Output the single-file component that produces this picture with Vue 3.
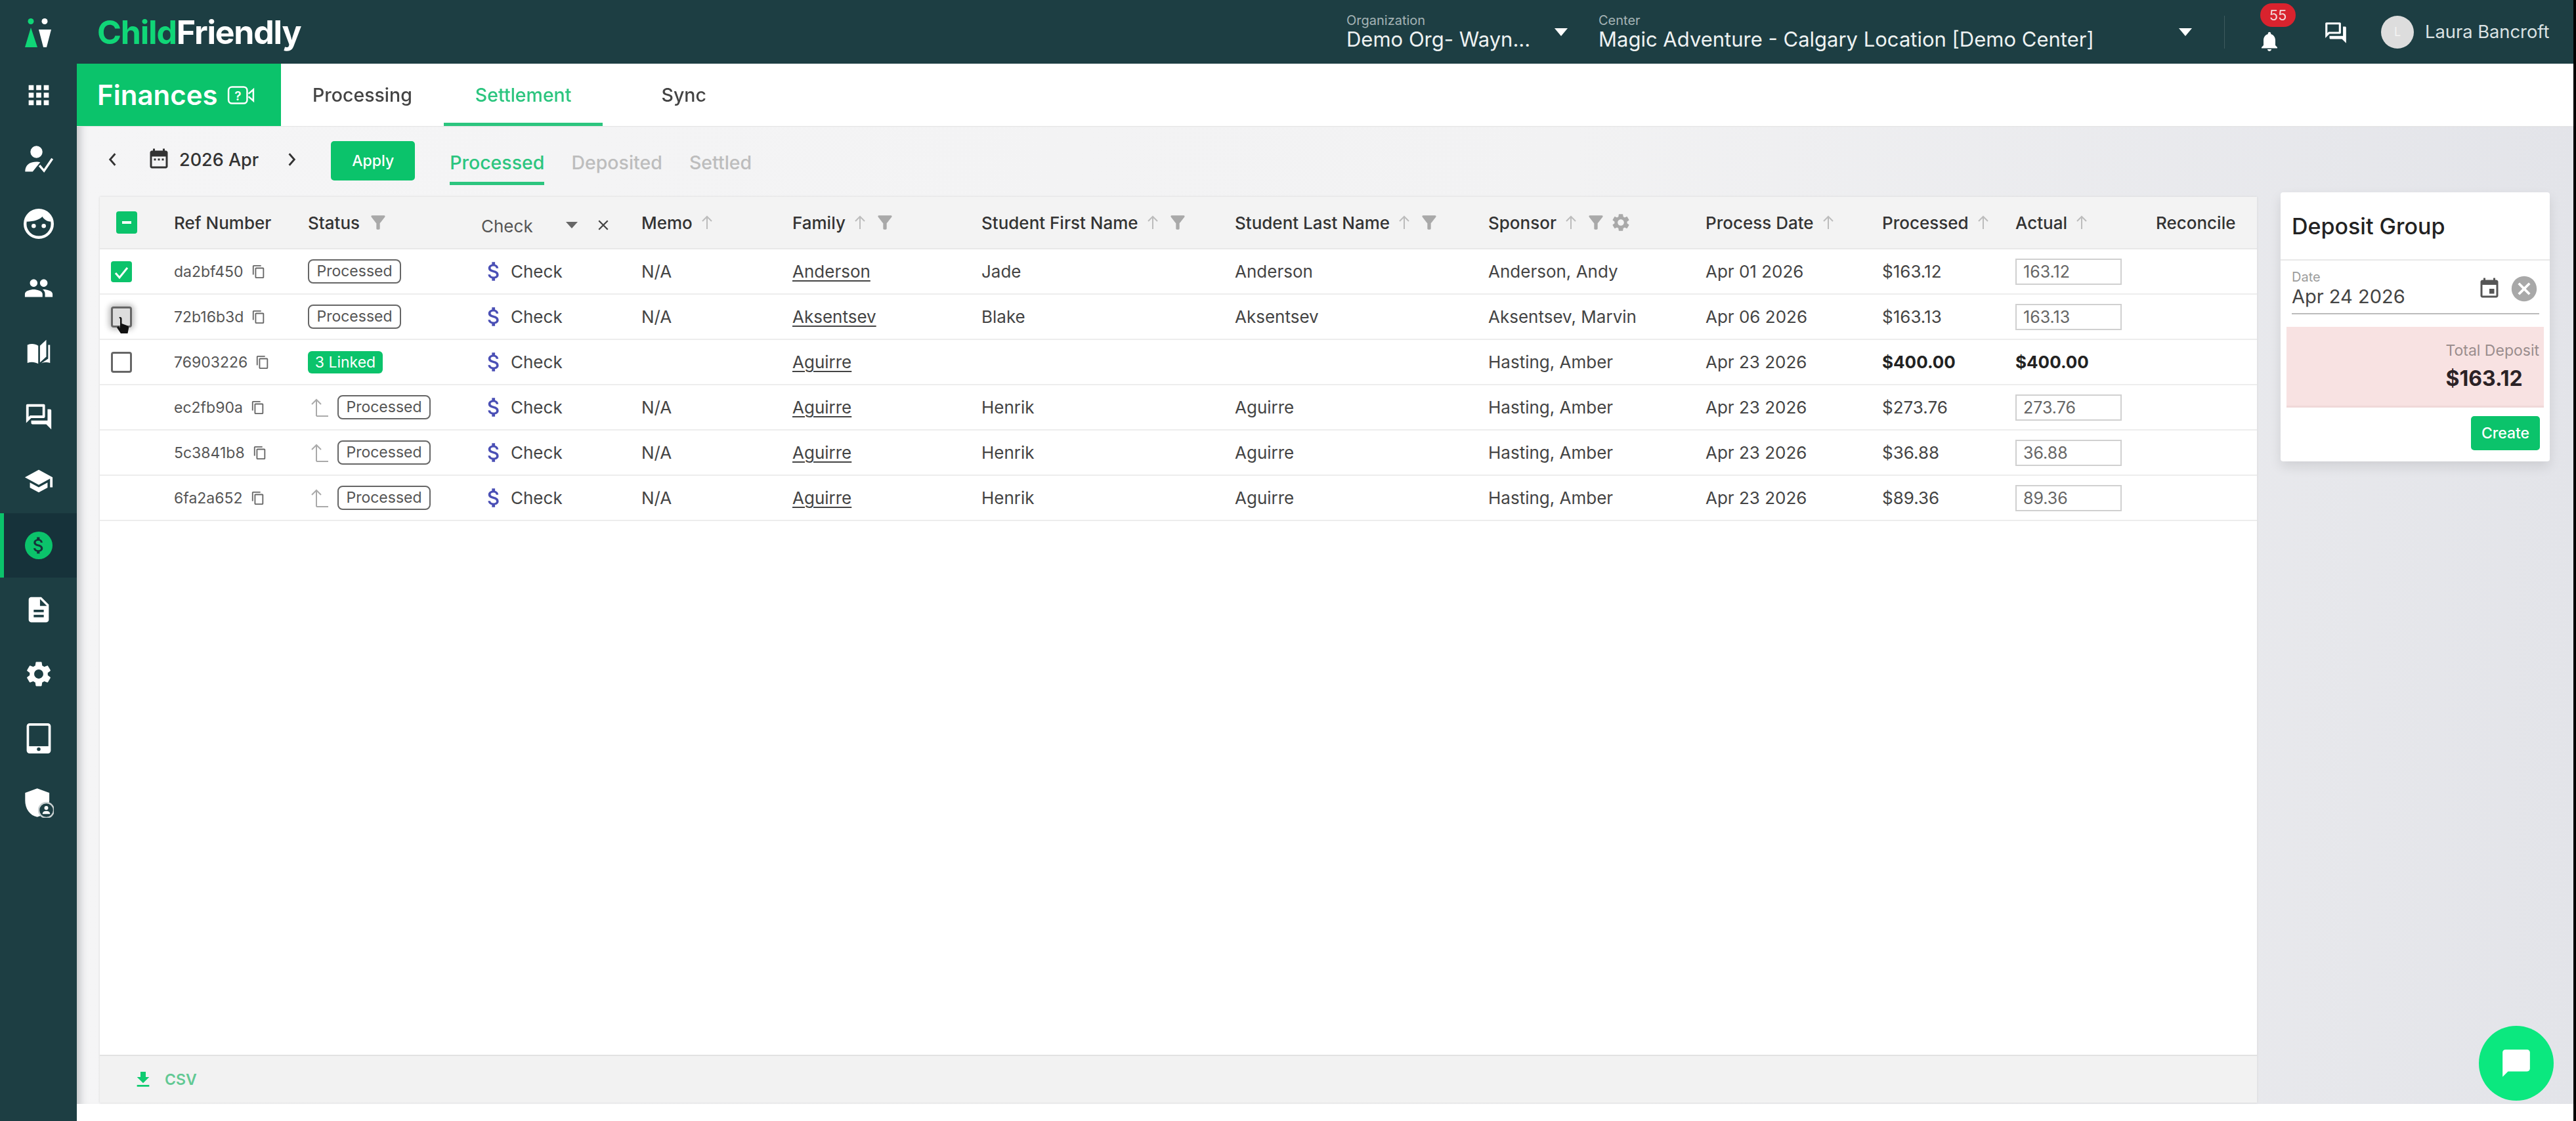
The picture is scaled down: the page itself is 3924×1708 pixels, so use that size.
<script setup>
const icons = {
  apps: 'M4 8h4V4H4v4zm6 12h4v-4h-4v4zm-6 0h4v-4H4v4zm0-6h4v-4H4v4zm6 0h4v-4h-4v4zm6-10v4h4V4h-4zm-6 4h4V4h-4v4zm6 6h4v-4h-4v4zm0 6h4v-4h-4v4z',
  people: 'M16 11c1.66 0 2.99-1.34 2.99-3S17.66 5 16 5c-1.66 0-3 1.34-3 3s1.34 3 3 3zm-8 0c1.66 0 2.99-1.34 2.99-3S9.66 5 8 5C6.34 5 5 6.34 5 8s1.34 3 3 3zm0 2c-2.33 0-7 1.17-7 3.5V19h14v-2.5c0-2.33-4.67-3.5-7-3.5zm8 0c-.29 0-.62.02-.97.05 1.16.84 1.97 1.97 1.97 3.45V19h6v-2.5c0-2.33-4.67-3.5-7-3.5z',
  book: 'M3 6c3-1.2 6-1 8.6.6V21c-2.600-1.500-5.600-1.700-8.600-.7zM13 6.600L18 2v13.400l-5 4.600zM19.500 6H21v14.300c-2.400-.7-4.800-.6-7 .3l5.500-3.600z',
  forum: 'M15 4v7H5.17L4 12.17V4h11m1-2H3c-.55 0-1 .45-1 1v14l4-4h10c.55 0 1-.45 1-1V3c0-.55-.45-1-1-1zm5 4h-2v9H6v2c0 .55.45 1 1 1h11l4 4V7c0-.55-.45-1-1-1z',
  school: 'M5 13.18v4L12 21l7-3.82v-4L12 17l-7-3.82zM12 3L1 9l11 6 9-4.91V17h2V9L12 3z',
  doc: 'M14 2H6c-1.1 0-1.99.9-1.99 2L4 20c0 1.1.89 2 1.99 2H18c1.1 0 2-.9 2-2V8l-6-6zm2 16H8v-2h8v2zm0-4H8v-2h8v2zm-3-5V3.5L18.5 9H13z',
  gear: 'M19.14 12.94c.04-.3.06-.61.06-.94 0-.32-.02-.64-.07-.94l2.03-1.58c.18-.14.23-.41.12-.61l-1.92-3.32c-.12-.22-.37-.29-.59-.22l-2.39.96c-.5-.38-1.03-.7-1.62-.94l-.36-2.54c-.04-.24-.24-.41-.48-.41h-3.84c-.24 0-.43.17-.47.41l-.36 2.54c-.59.24-1.13.57-1.62.94l-2.39-.96c-.22-.08-.47 0-.59.22L2.74 8.87c-.12.21-.08.47.12.61l2.03 1.58c-.05.3-.09.63-.09.94s.02.64.07.94l-2.03 1.58c-.18.14-.23.41-.12.61l1.92 3.32c.12.22.37.29.59.22l2.39-.96c.5.38 1.03.7 1.62.94l.36 2.54c.05.24.24.41.48.41h3.84c.24 0 .44-.17.47-.41l.36-2.54c.59-.24 1.13-.56 1.62-.94l2.39.96c.22.08.47 0 .59-.22l1.92-3.32c.12-.22.07-.47-.12-.61l-2.01-1.58zM12 15.6c-1.98 0-3.6-1.62-3.6-3.6s1.62-3.6 3.6-3.6 3.6 1.62 3.6 3.6-1.62 3.6-3.6 3.6z',
  money: 'M11.8 10.9c-2.27-.59-3-1.2-3-2.15 0-1.09 1.01-1.85 2.7-1.85 1.78 0 2.44.85 2.5 2.1h2.21c-.07-1.72-1.12-3.3-3.21-3.81V3h-3v2.16c-1.94.42-3.5 1.68-3.5 3.61 0 2.31 1.91 3.46 4.7 4.13 2.5.6 3 1.48 3 2.41 0 .69-.49 1.79-2.7 1.79-2.06 0-2.87-.92-2.98-2.1h-2.2c.12 2.19 1.76 3.42 3.68 3.83V21h3v-2.15c1.95-.37 3.5-1.5 3.5-3.55 0-2.84-2.43-3.81-4.7-4.4z',
  copy: 'M16 1H4c-1.1 0-2 .9-2 2v14h2V3h12V1zm3 4H8c-1.1 0-2 .9-2 2v14c0 1.1.9 2 2 2h11c1.1 0 2-.9 2-2V7c0-1.1-.9-2-2-2zm0 16H8V7h11v14z',
  funnel: 'M4.25 5.61C6.27 8.2 10 13 10 13v6c0 .55.45 1 1 1h2c.55 0 1-.45 1-1v-6s3.72-4.8 5.74-7.39A.998.998 0 0018.95 4H5.04c-.83 0-1.32.95-.79 1.61z',
  event: 'M17 12h-5v5h5v-5zM16 1v2H8V1H6v2H5c-1.11 0-1.99.9-1.99 2L3 19c0 1.1.89 2 2 2h14c1.1 0 2-.9 2-2V5c0-1.1-.9-2-2-2h-1V1h-2zm3 18H5V8h14v11z',
  month: 'M19 3h-1V1h-2v2H8V1H6v2H5c-1.11 0-2 .9-2 2v14c0 1.1.89 2 2 2h14c1.1 0 2-.9 2-2V5c0-1.1-.9-2-2-2zm0 16H5V9h14v10zM7 11h2v2H7zm4 0h2v2h-2zm4 0h2v2h-2z',
  cancel: 'M12 2C6.47 2 2 6.47 2 12s4.47 10 10 10 10-4.47 10-10S17.53 2 12 2zm5 13.59L15.59 17 12 13.41 8.41 17 7 15.59 10.59 12 7 8.41 8.41 7 12 10.59 15.59 7 17 8.41 13.41 12 17 15.59z',
  bell: 'M12 22c1.1 0 2-.9 2-2h-4c0 1.1.89 2 2 2zm6-6v-5c0-3.07-1.64-5.64-4.5-6.32V4c0-.83-.67-1.5-1.5-1.5s-1.5.67-1.5 1.5v.68C7.63 5.36 6 7.92 6 11v5l-2 2v1h16v-1l-2-2z',
  download: 'M19 9h-4V3H9v6H5l7 7 7-7zM5 18v2h14v-2H5z',
  chat: 'M20 2H4c-1.1 0-2 .9-2 2v18l4-4h14c1.1 0 2-.9 2-2V4c0-1.1-.9-2-2-2z',
}

const navTop = [icons.apps]
const navMid = [icons.people, icons.book, icons.forum, icons.school]
const navEnd = [icons.doc, icons.gear]

// width of every table column, first one holds the checkbox
const columns = [
  { label: '', w: 113 },
  { label: 'Ref Number', w: 204 },
  { label: 'Status', w: 264, filter: true },
  { label: 'check', w: 244 },
  { label: 'Memo', w: 230, sort: true },
  { label: 'Family', w: 288, sort: true, filter: true },
  { label: 'Student First Name', w: 386, sort: true, filter: true },
  { label: 'Student Last Name', w: 386, sort: true, filter: true },
  { label: 'Sponsor', w: 331, sort: true, filter: true, gear: true },
  { label: 'Process Date', w: 269, sort: true },
  { label: 'Processed', w: 203, sort: true },
  { label: 'Actual', w: 214, sort: true },
  { label: 'Reconcile', w: 154 },
]
const gridCols = columns.map(c => c.w + 'px').join(' ')

const rows = [
  { id: 1, box: 'checked', ref: 'da2bf450', memo: 'N/A', family: 'Anderson', first: 'Jade', last: 'Anderson', sponsor: 'Anderson, Andy', date: 'Apr 01 2026', amount: '$163.12', actual: '163.12' },
  { id: 2, box: 'hover', ref: '72b16b3d', memo: 'N/A', family: 'Aksentsev', first: 'Blake', last: 'Aksentsev', sponsor: 'Aksentsev, Marvin', date: 'Apr 06 2026', amount: '$163.13', actual: '163.13' },
  { id: 3, box: 'empty', ref: '76903226', linked: '3 Linked', memo: '', family: 'Aguirre', first: '', last: '', sponsor: 'Hasting, Amber', date: 'Apr 23 2026', amount: '$400.00', total: '$400.00' },
  { id: 4, child: true, ref: 'ec2fb90a', memo: 'N/A', family: 'Aguirre', first: 'Henrik', last: 'Aguirre', sponsor: 'Hasting, Amber', date: 'Apr 23 2026', amount: '$273.76', actual: '273.76' },
  { id: 5, child: true, ref: '5c3841b8', memo: 'N/A', family: 'Aguirre', first: 'Henrik', last: 'Aguirre', sponsor: 'Hasting, Amber', date: 'Apr 23 2026', amount: '$36.88', actual: '36.88' },
  { id: 6, child: true, ref: '6fa2a652', memo: 'N/A', family: 'Aguirre', first: 'Henrik', last: 'Aguirre', sponsor: 'Hasting, Amber', date: 'Apr 23 2026', amount: '$89.36', actual: '89.36' },
]
</script>

<template>
  <div class="screen">
    <aside class="side">
      <svg class="logo-mark" viewBox="0 0 40 44">
        <circle cx="9" cy="4.5" r="4.5" fill="#10d677" />
        <circle cx="30" cy="4.5" r="4.5" fill="#fff" />
        <path d="M9 14L19 44H0z" fill="#10d677" />
        <path d="M21 17h19l-7 27h-5z" fill="#fff" />
      </svg>
      <nav class="nav">
        <div v-for="d in navTop" :key="d" class="nav-item"><svg viewBox="0 0 24 24" class="nav-icon"><path :d="d" /></svg></div>
        <div class="nav-item">
          <svg viewBox="0 0 40 36" class="nav-icon">
            <circle cx="17" cy="8" r="8" />
            <path d="M2 34c0-8 5-13 15-13 2 0 4 .2 5 .6L12 34z" />
            <path d="M21 26l6 7L38 17" fill="none" stroke="#fff" stroke-width="3" />
          </svg>
        </div>
        <div class="nav-item">
          <svg viewBox="0 0 42 42" class="nav-icon">
            <circle cx="21" cy="21" r="19" fill="none" stroke="#fff" stroke-width="4" />
            <path d="M4 18C6 6 14 3 21 3s15 3 17 15c-4 0-9-2-12-7-3 4-12 7-22 7z" />
            <circle cx="14" cy="24" r="3" />
            <circle cx="28" cy="24" r="3" />
          </svg>
        </div>
        <div v-for="d in navMid" :key="d" class="nav-item"><svg viewBox="0 0 24 24" class="nav-icon"><path :d="d" /></svg></div>
        <div class="nav-item active">
          <svg viewBox="0 0 24 24" class="nav-icon money">
            <circle cx="12" cy="12" r="12" fill="#0bc36b" />
            <path :d="icons.money" fill="#16323a" transform="translate(2.4 2.4) scale(.8)" />
          </svg>
        </div>
        <div v-for="d in navEnd" :key="d" class="nav-item"><svg viewBox="0 0 24 24" class="nav-icon"><path :d="d" /></svg></div>
        <div class="nav-item">
          <svg viewBox="0 0 40 50" class="nav-icon">
            <rect x="2" y="2" width="36" height="46" rx="3" fill="none" stroke="#fff" stroke-width="4" />
            <rect x="2" y="38" width="36" height="10" />
            <circle cx="20" cy="43" r="3" fill="#1d3e43" />
          </svg>
        </div>
        <div class="nav-item">
          <svg viewBox="0 0 40 40" class="nav-icon">
            <path d="M18 1l16 6v10c0 11-7 20-16 22C8 37 2 28 2 17V7z" />
            <circle cx="30" cy="30" r="10" fill="#1d3e43" stroke="#c9d0d1" stroke-width="2" />
            <circle cx="30" cy="27" r="2.6" fill="#fff" />
            <path d="M25 35c0-3 2-4 5-4s5 1 5 4z" />
          </svg>
        </div>
      </nav>
    </aside>

    <div class="page">
      <header class="topbar">
        <div class="brand"><span class="brand-green">Child</span>Friendly</div>
        <div class="pick org">
          <div class="pick-label">Organization</div>
          <div class="pick-value">Demo Org- Wayn...</div>
        </div>
        <i class="caret org-caret"></i>
        <div class="pick center">
          <div class="pick-label">Center</div>
          <div class="pick-value">Magic Adventure - Calgary Location [Demo Center]</div>
        </div>
        <i class="caret"></i>
        <div class="divider"></div>
        <div class="bell">
          <svg viewBox="0 0 24 24" class="bell-icon"><path :d="icons.bell" /></svg>
          <span class="badge">55</span>
        </div>
        <svg viewBox="0 0 24 24" class="top-chat"><path :d="icons.forum" /></svg>
        <div class="avatar">L</div>
        <div class="user">Laura Bancroft</div>
      </header>

      <div class="title-row">
        <div class="title">
          Finances
          <svg viewBox="0 0 40 30" class="title-icon">
            <rect x="2" y="3" width="27" height="24" rx="5" fill="none" stroke="#fff" stroke-width="2.4" />
            <path d="M31 13l7-6v16l-7-6" fill="none" stroke="#fff" stroke-width="2.4" />
            <text x="15.5" y="23" class="title-q">?</text>
          </svg>
        </div>
        <div class="tab">Processing</div>
        <div class="tab on">Settlement</div>
        <div class="tab">Sync</div>
      </div>

      <main class="content">
        <div class="toolbar">
          <svg viewBox="0 0 12 20" class="chev"><path d="M10 2L3 10l7 8" /></svg>
          <svg viewBox="0 0 24 24" class="cal"><path :d="icons.month" /></svg>
          <span class="month">2026 Apr</span>
          <svg viewBox="0 0 12 20" class="chev next"><path d="M2 2l7 8-7 8" /></svg>
          <button class="apply">Apply</button>
          <div class="sub on">Processed</div>
          <div class="sub">Deposited</div>
          <div class="sub">Settled</div>
        </div>

        <div class="work">
          <section class="table">
            <div class="row head" :style="{ gridTemplateColumns: gridCols }">
              <div v-for="(c, i) in columns" :key="i" class="hcell">
                <span v-if="i === 0" class="box minus"></span>
                <template v-else-if="c.label === 'check'">
                  <span class="type-filter">Check</span>
                  <i class="type-caret"></i>
                  <svg viewBox="0 0 16 16" class="type-x"><path d="M2 2l12 12M14 2L2 14" /></svg>
                </template>
                <template v-else>
                  <span>{{ c.label }}</span>
                  <svg v-if="c.sort" viewBox="0 0 20 24" class="sort"><path d="M10 22V3M3 10l7-7 7 7" /></svg>
                  <svg v-if="c.filter" viewBox="0 0 24 24" class="filter"><path :d="icons.funnel" /></svg>
                  <svg v-if="c.gear" viewBox="0 0 24 24" class="filter gear"><path :d="icons.gear" /></svg>
                </template>
              </div>
            </div>

            <div v-for="r in rows" :key="r.id" class="row" :style="{ gridTemplateColumns: gridCols }">
              <div class="cell first">
                <span v-if="r.box" class="box" :class="r.box"></span>
                <svg v-if="r.box === 'checked'" viewBox="0 0 32 32" class="tick"><path d="M7 17l6 7L25 9" /></svg>
                <svg v-if="r.box === 'hover'" viewBox="0 0 20 28" class="cursor"><path d="M6 1c1.5 0 2.5 1 2.5 2.5V11l8 3c2 .8 3 2 2.6 4l-1.6 8H7L1 17l2-2 3 2.5V3.500C3.500 2 4.500 1 6 1z" /></svg>
              </div>
              <div class="cell ref">
                {{ r.ref }}
                <svg viewBox="0 0 24 24" class="copy"><path :d="icons.copy" /></svg>
              </div>
              <div class="cell">
                <svg v-if="r.child" viewBox="0 0 28 30" class="link-arrow"><path d="M9 28V3M2 10l7-7 7 7M9 28h18" /></svg>
                <span v-if="r.linked" class="linked">{{ r.linked }}</span>
                <span v-else class="pill">Processed</span>
              </div>
              <div class="cell method">
                <svg viewBox="6 3 12 18" class="dollar"><path :d="icons.money" /></svg>
                Check
              </div>
              <div class="cell">{{ r.memo }}</div>
              <div class="cell"><u class="family">{{ r.family }}</u></div>
              <div class="cell">{{ r.first }}</div>
              <div class="cell">{{ r.last }}</div>
              <div class="cell">{{ r.sponsor }}</div>
              <div class="cell">{{ r.date }}</div>
              <div class="cell" :class="{ strong: r.total }">{{ r.amount }}</div>
              <div class="cell">
                <span v-if="r.total" class="strong">{{ r.total }}</span>
                <input v-else class="actual" :value="r.actual" />
              </div>
              <div class="cell"></div>
            </div>

            <div class="fill"></div>
            <footer class="table-foot">
              <svg viewBox="0 0 24 24" class="dl"><path :d="icons.download" /></svg>
              <span>CSV</span>
            </footer>
          </section>

          <aside class="deposit">
            <h2>Deposit Group</h2>
            <div class="date-field">
              <div class="date-text">
                <div class="date-label">Date</div>
                <div class="date-value">Apr 24 2026</div>
              </div>
              <svg viewBox="0 0 24 24" class="date-cal"><path :d="icons.event" /></svg>
              <svg viewBox="0 0 24 24" class="date-clear"><path :d="icons.cancel" /></svg>
            </div>
            <div class="total">
              <div>
                <div class="total-label">Total Deposit</div>
                <div class="total-value">$163.12</div>
              </div>
            </div>
            <div class="deposit-foot"><button class="create">Create</button></div>
          </aside>
        </div>

        <div class="fab"><svg viewBox="0 0 24 24"><path :d="icons.chat" /></svg></div>
      </main>
      <div class="strip"></div>
    </div>
    <div class="edge"></div>
  </div>
</template>

<style>
html, body {
  margin: 0;
  background: #fff;
}
</style>

<style scoped>
.screen {
  display: flex;
  width: 3924px;
  height: 1708px;
  overflow: hidden;
  font-family: Inter, "Liberation Sans", sans-serif;
  color: #444;
  filter: blur(0.6px);
}
.edge {
  width: 4px;
  flex: none;
  background: #000;
}

/* sidebar */
.side {
  width: 117px;
  flex: none;
  background: #1d3e43;
  position: relative;
  z-index: 2;
}
.logo-mark {
  display: block;
  width: 40px;
  height: 44px;
  margin: 28px 0 0 38px;
}
.nav {
  margin-top: 24px;
}
.nav-item {
  height: 98px;
  display: flex;
  align-items: center;
  justify-content: center;
}
.nav-icon {
  width: 46px;
  height: 46px;
  fill: #fff;
}
.nav-item.active {
  background: #16323a;
  box-shadow: inset 6px 0 0 #0bc36b;
}
.nav-icon.money {
  width: 42px;
  height: 42px;
}

/* top bar */
.page {
  width: 3803px;
  display: flex;
  flex-direction: column;
}
.topbar {
  height: 97px;
  flex: none;
  background: #1d3e43;
  display: flex;
  align-items: center;
  color: #fff;
}
.brand {
  width: 1934px;
  padding-left: 31px;
  box-sizing: border-box;
  font-size: 50px;
  font-weight: 700;
  letter-spacing: -1.2px;
}
.brand-green {
  color: #10d677;
}
.pick-label {
  font-size: 20px;
  line-height: 22px;
  color: #a4b3b5;
}
.pick-value {
  font-size: 31px;
  line-height: 36px;
  color: #eef2f2;
  white-space: nowrap;
}
.pick.org {
  width: 320px;
}
.pick.center {
  width: 884px;
  margin-left: 47px;
}
.caret {
  width: 0;
  height: 0;
  border-left: 10px solid transparent;
  border-right: 10px solid transparent;
  border-top: 12px solid #fff;
  flex: none;
}
.org-caret {
  margin-left: -3px;
}
.divider {
  width: 1px;
  height: 50px;
  margin-left: 49px;
  background: #3d5a5e;
}
.bell {
  position: relative;
  margin-left: 50px;
  width: 36px;
  height: 36px;
}
.bell-icon {
  width: 36px;
  height: 36px;
  fill: #fff;
  margin-top: 14px;
}
.badge {
  position: absolute;
  top: -26px;
  left: -6px;
  width: 54px;
  height: 36px;
  border-radius: 18px;
  background: #d9232e;
  color: #f3d9da;
  font-size: 22px;
  line-height: 36px;
  text-align: center;
  transform: translateX(10px);
}
.top-chat {
  width: 38px;
  height: 38px;
  fill: #fff;
  margin-left: 64px;
  margin-top: 2px;
}
.avatar {
  width: 50px;
  height: 50px;
  margin-left: 50px;
  border-radius: 50%;
  background: #ddd;
  color: #f3f3f3;
  font-size: 18px;
  line-height: 50px;
  text-align: center;
}
.user {
  margin-left: 17px;
  font-size: 27.3px;
  color: #dbe2e3;
  white-space: nowrap;
}

/* title row */
.title-row {
  height: 96px;
  flex: none;
  display: flex;
  background: #fff;
  border-bottom: 1px solid #e4e4e4;
  box-sizing: border-box;
}
.title {
  width: 311px;
  background: #0bc36b;
  color: #fff;
  font-size: 42px;
  font-weight: 600;
  display: flex;
  align-items: center;
  gap: 14px;
  padding-left: 31px;
  box-sizing: border-box;
}
.title-icon {
  width: 42px;
  height: 32px;
}
.title-q {
  font-size: 18px;
  fill: #fff;
  text-anchor: middle;
}
.tab {
  display: flex;
  align-items: center;
  font-size: 28.5px;
  font-weight: 500;
  color: #444;
  padding: 0 48px;
  box-sizing: border-box;
}
.tab:first-of-type {
  font-size: 28px;
}
.tab:last-child {
  padding-left: 89px;
}
.tab.on {
  color: #2cc57f;
  border-bottom: 5px solid #2cc57f;
  padding-top: 5px;
}

/* content */
.content {
  position: relative;
  flex: 1;
  background: linear-gradient(90deg, #f5f5f6 0%, #f2f2f3 60%, #e3e4e9 100%);
  box-shadow: inset 16px 0 14px -12px #b9bcbf;
  padding-left: 35px;
}
.toolbar {
  height: 100px;
  display: flex;
  align-items: center;
  position: relative;
}
.chev {
  width: 14px;
  height: 22px;
  margin-left: 12px;
  fill: none;
  stroke: #333;
  stroke-width: 2.6;
}
.chev.next {
  margin-left: 44px;
}
.cal {
  width: 36px;
  height: 36px;
  margin-left: 46px;
  fill: #333;
}
.month {
  margin-left: 13px;
  font-size: 27px;
  font-weight: 500;
  color: #333;
}
.apply {
  width: 128px;
  height: 60px;
  margin-left: 52px;
  margin-top: 3px;
  border: 0;
  border-radius: 5px;
  background: #0bc36b;
  color: #fff;
  font-family: inherit;
  font-size: 23px;
  font-weight: 500;
}
.sub {
  height: 66px;
  margin-left: 53px;
  margin-top: 12px;
  box-sizing: border-box;
  padding-top: 14px;
  font-size: 28.5px;
  font-weight: 500;
  color: #bdbdbd;
}
.sub + .sub {
  margin-left: 41px;
}
.sub.on {
  color: #2cc57f;
  border-bottom: 5px solid #2cc57f;
}

.work {
  display: flex;
  align-items: flex-start;
  gap: 36px;
}
.table {
  width: 3286px;
  height: 1380px;
  margin-top: 7px;
  display: flex;
  flex-direction: column;
  background: #fff;
  box-shadow: 0 0 3px #d4d4d4;
}
.row {
  display: grid;
  height: 69px;
  flex: none;
  box-sizing: border-box;
  border-bottom: 2px solid #ededed;
  font-size: 26px;
  color: #444;
}
.row.head {
  height: 80px;
  background: #f3f3f3;
  border-bottom: 2px solid #e8e8e8;
  color: #333;
  font-weight: 500;
}
.hcell {
  display: flex;
  align-items: center;
  white-space: nowrap;
}
.sort {
  width: 20px;
  height: 24px;
  margin-left: 12px;
  fill: none;
  stroke: #bcbcbc;
  stroke-width: 2;
  flex: none;
}
.filter {
  width: 32px;
  height: 32px;
  margin-left: 12px;
  fill: #a9a9a9;
  flex: none;
}
.gear {
  margin-left: 6px;
}
.type-filter {
  font-weight: 400;
  color: #555;
  margin-top: 10px;
  width: 129px;
}
.type-caret {
  width: 0;
  height: 0;
  border-left: 9px solid transparent;
  border-right: 9px solid transparent;
  border-top: 10px solid #666;
  margin-top: 8px;
}
.type-x {
  width: 18px;
  height: 18px;
  margin-left: 30px;
  margin-top: 8px;
  fill: none;
  stroke: #444;
  stroke-width: 2;
}
.cell {
  display: flex;
  align-items: center;
  white-space: nowrap;
  position: relative;
}
.ref {
  font-size: 23px;
  color: #555;
}
.copy {
  width: 22px;
  height: 24px;
  margin-left: 12px;
  fill: #666;
}
.box {
  display: block;
  width: 32px;
  height: 32px;
  box-sizing: border-box;
  border-radius: 4px;
  margin-left: 17px;
  position: relative;
}
.box.checked {
  background: #0bc36b;
}
.box.empty,
.box.hover {
  border: 3px solid #666;
}
.box.hover {
  box-shadow: 0 0 8px 3px #bbb;
  background: #ddd;
}
.box.minus {
  margin-left: 25px;
  height: 34px;
  background: #0bc36b;
}
.box.minus::after {
  content: "";
  position: absolute;
  left: 9px;
  right: 9px;
  top: 15px;
  height: 4px;
  background: #fff;
}
.tick {
  position: absolute;
  left: 17px;
  top: 19px;
  width: 32px;
  height: 32px;
  fill: none;
  stroke: #fff;
  stroke-width: 3;
}
.cursor {
  position: absolute;
  left: 25px;
  top: 33px;
  width: 20px;
  height: 28px;
  fill: #111;
}
.pill {
  display: inline-block;
  width: 142px;
  height: 37px;
  box-sizing: border-box;
  border: 2px solid #666;
  border-radius: 8px;
  font-size: 23px;
  line-height: 32px;
  text-align: center;
  color: #555;
}
.linked {
  width: 114px;
  height: 34px;
  border-radius: 6px;
  background: #0bc36b;
  color: #fff;
  font-size: 23px;
  line-height: 34px;
  text-align: center;
}
.link-arrow {
  width: 28px;
  height: 30px;
  margin: 0 13px 0 4px;
  fill: none;
  stroke: #aaa;
  stroke-width: 2;
}
.method {
  padding-left: 10px;
  gap: 16px;
}
.dollar {
  width: 19px;
  height: 29px;
  fill: #4a4fb5;
}
.family {
  text-underline-offset: 4px;
}
.strong {
  font-weight: 700;
  color: #222;
}
.actual {
  width: 162px;
  height: 40px;
  box-sizing: border-box;
  border: 2px solid #d0d0d0;
  padding: 0 10px;
  font-family: inherit;
  font-size: 25px;
  color: #666;
  background: #fff;
  outline: none;
}
.fill {
  flex: 1;
}
.table-foot {
  height: 73px;
  flex: none;
  background: #f2f2f2;
  border-top: 2px solid #e2e2e2;
  box-sizing: border-box;
  display: flex;
  align-items: center;
  padding-left: 50px;
  gap: 17px;
  font-size: 23px;
  font-weight: 600;
  color: #62c994;
}
.dl {
  width: 32px;
  height: 32px;
  fill: #0fcb70;
}

/* deposit card */
.deposit {
  width: 410px;
  height: 410px;
  background: #fff;
  border-radius: 4px;
  box-shadow: 0 8px 18px rgba(0, 0, 0, 0.1);
  box-sizing: border-box;
}
.deposit h2 {
  margin: 0;
  height: 104px;
  padding-left: 17px;
  box-sizing: border-box;
  font-size: 34px;
  font-weight: 500;
  line-height: 104px;
  color: #222;
  border-bottom: 2px solid #e8e8e8;
}
.date-field {
  height: 82px;
  margin: 0 16px 0 17px;
  padding-top: 6px;
  display: flex;
  align-items: center;
  border-bottom: 2px solid #bbb;
  box-sizing: border-box;
}
.date-text {
  flex: 1;
}
.date-label {
  font-size: 20px;
  color: #9c9c9c;
  line-height: 24px;
}
.date-value {
  font-size: 29px;
  line-height: 36px;
  color: #444;
}
.date-cal {
  width: 36px;
  height: 36px;
  fill: #555;
  margin-right: 12px;
  margin-left: -2px;
}
.date-clear {
  width: 46px;
  height: 46px;
  fill: #a8a8a8;
}
.total {
  height: 123px;
  margin: 19px 9px 0;
  background: #f8e2e2;
  border-bottom: 3px solid #f0d8d8;
  box-sizing: border-box;
  display: flex;
  justify-content: flex-end;
  align-items: center;
  padding-right: 7px;
}
.total-label {
  font-size: 23px;
  line-height: 30px;
  color: #9a8d8d;
}
.total-value {
  margin-top: 8px;
  font-size: 32px;
  line-height: 40px;
  font-weight: 700;
  color: #2b2226;
}
.deposit-foot {
  display: flex;
  justify-content: flex-end;
  padding: 13px 15px 0 0;
}
.create {
  width: 105px;
  height: 52px;
  border: 0;
  border-radius: 5px;
  background: #0bc36b;
  color: #fff;
  font-family: inherit;
  font-size: 23px;
  font-weight: 500;
}

.fab {
  position: absolute;
  left: 3659px;
  top: 1370px;
  width: 114px;
  height: 114px;
  border-radius: 50%;
  background: #0be87f;
  display: flex;
  align-items: center;
  justify-content: center;
  z-index: 3;
}
.fab svg {
  width: 50px;
  height: 50px;
  fill: #fff;
}
.strip {
  height: 26px;
  flex: none;
  background: #fff;
}
</style>
